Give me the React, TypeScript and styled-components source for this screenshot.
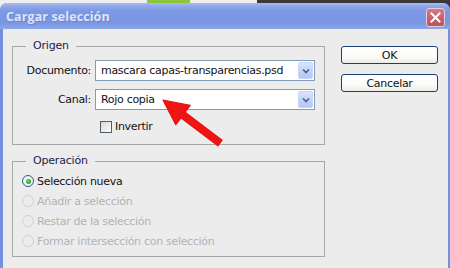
import React from "react";
import styled, { createGlobalStyle } from "styled-components";

const Global = createGlobalStyle`
  html, body { margin: 0; padding: 0; }
  body {
    width: 450px; height: 268px; overflow: hidden;
    font-family: "DejaVu Sans", Tahoma, sans-serif;
  }
`;

const Screen = styled.div`
  position: relative;
  width: 450px;
  height: 268px;
  display: flex;
  flex-direction: column;
  background: linear-gradient(90deg, #eeeeee 0 147px, #8cc43a 147px 190px, #eeeeee 190px 257px, #3a3a3a 257px 450px);
`;

const Window = styled.div`
  margin-top: 3px;
  flex: 1;
  display: flex;
  flex-direction: column;
  border-radius: 7px 7px 0 0;
  background: #7690e0;
  overflow: hidden;
`;

const TitleBar = styled.div`
  height: 26px;
  flex: none;
  display: flex;
  align-items: center;
  justify-content: space-between;
  padding: 0 5px 0 6px;
  background: linear-gradient(180deg, #a9bcf1 0px, #8ea8ea 3px, #7c98e3 8px, #7a96e2 20px, #86a1e7 24px, #8ea7e8 26px);
`;

const Title = styled.span`
  font-family: "Open Sans", "DejaVu Sans", sans-serif;
  font-weight: 700;
  font-size: 12.5px;
  color: #dde5f9;
  letter-spacing: 0.1px;
  text-shadow: 1px 1px 0 rgba(80, 100, 170, 0.35);
`;

const CloseButton = styled.div`
  width: 17px;
  height: 17px;
  border: 1px solid #e6cbd2;
  border-radius: 3px;
  background: linear-gradient(180deg, #d27c88 0%, #c0606e 60%, #b45765 100%);
  display: flex;
  align-items: center;
  justify-content: center;
  margin-top: 2px;
`;

const Body = styled.div`
  flex: 1;
  margin: 0 2px 0 3px;
  background: #ececec;
  display: flex;
  gap: 16px;
  padding: 11px 10px 0 9px;
`;

const LeftColumn = styled.div`
  width: 313px;
  display: flex;
  flex-direction: column;
  gap: 10px;
`;

const Group = styled.fieldset<{ $pb: number }>`
  margin: 0;
  border: 1px solid #a7a7a7;
  padding: 0 9px ${(p) => p.$pb}px 9px;
  min-width: 0;
`;

const Legend = styled.legend`
  margin-left: 4px;
  padding: 0 7px;
  font-size: 11px;
  line-height: 12px;
  letter-spacing: -0.2px;
  color: #1c2050;
`;

const FormGrid = styled.div`
  display: grid;
  grid-template-columns: 69px 220px;
  grid-template-rows: 21px 21px 17px;
  column-gap: 4px;
  row-gap: 8px;
  padding-top: 8px;
  align-items: center;
`;

const Label = styled.label`
  font-size: 11px;
  letter-spacing: -0.3px;
  color: #111;
  text-align: right;
  white-space: nowrap;
`;

const Select = styled.div`
  height: 21px;
  box-sizing: border-box;
  border: 1px solid #7f9db9;
  background: #fff;
  display: flex;
  align-items: center;
  justify-content: space-between;
  padding: 0 1px 0 5px;
`;

const SelectText = styled.span`
  font-size: 11px;
  letter-spacing: -0.3px;
  color: #111;
  white-space: nowrap;
`;

const DropButton = styled.div`
  width: 15px;
  height: 17px;
  box-sizing: border-box;
  border: 1px solid #c6d5f8;
  border-radius: 2px;
  background: linear-gradient(180deg, #dbe5fd 0%, #c3d3f9 50%, #b5c8f5 100%);
  display: flex;
  align-items: center;
  justify-content: center;
`;

const CheckRow = styled.div`
  grid-column: 2;
  display: flex;
  align-items: center;
  gap: 3px;
  padding-left: 5px;
  height: 17px;
`;

const CheckBox = styled.div`
  width: 12px;
  height: 12px;
  box-sizing: border-box;
  border: 1px solid #4f5b68;
  background: linear-gradient(135deg, #d8d8d4 0%, #f2f2f0 70%, #ffffff 100%);
`;

const RadioList = styled.div`
  display: flex;
  flex-direction: column;
  padding-top: 4px;
`;

const RadioRow = styled.div<{ $disabled?: boolean }>`
  height: 20px;
  display: flex;
  align-items: center;
  gap: 3px;
  font-size: 11px;
  letter-spacing: -0.3px;
  color: ${(p) => (p.$disabled ? "#b3b3b3" : "#111")};
  white-space: nowrap;
`;

const RadioCircle = styled.div<{ $disabled?: boolean; $checked?: boolean }>`
  width: 12px;
  height: 12px;
  box-sizing: border-box;
  border-radius: 50%;
  border: 1px solid ${(p) => (p.$disabled ? "#d0d0d0" : "#2b5c8a")};
  background: ${(p) =>
    p.$disabled ? "#ececec" : "radial-gradient(circle at 60% 60%, #ffffff 0%, #e6e6e0 100%)"};
  display: flex;
  align-items: center;
  justify-content: center;
  &::after {
    content: "";
    display: ${(p) => (p.$checked ? "block" : "none")};
    width: 5px;
    height: 5px;
    border-radius: 50%;
    background: radial-gradient(circle at 40% 40%, #6fdc6f 0%, #21a221 70%);
  }
`;

const RightColumn = styled.div`
  width: 97px;
  display: flex;
  flex-direction: column;
  gap: 10px;
  padding-top: 6px;
`;

const Button = styled.button`
  height: 18px;
  width: 97px;
  box-sizing: border-box;
  border: 1px solid #1d3f73;
  border-radius: 3px;
  background: linear-gradient(180deg, #ffffff 0%, #fbfbfa 60%, #ecebe6 100%);
  font-family: "DejaVu Sans", Tahoma, sans-serif;
  font-size: 11px;
  letter-spacing: -0.3px;
  color: #111;
  padding: 0;
  display: flex;
  align-items: center;
  justify-content: center;
`;

const Overlay = styled.svg`
  position: absolute;
  left: 0;
  top: 0;
  pointer-events: none;
`;

export default function App() {
  return (
    <>
      <Global />
      <Screen>
        <Window>
          <TitleBar>
            <Title>Cargar selección</Title>
            <CloseButton>
              <svg width="11" height="11" viewBox="0 0 11 11">
                <path d="M1.5 1.5 L9.5 9.5 M9.5 1.5 L1.5 9.5" stroke="#fff" strokeWidth="2" strokeLinecap="square" />
              </svg>
            </CloseButton>
          </TitleBar>
          <Body>
            <LeftColumn>
              <Group $pb={9}>
                <Legend>Origen</Legend>
                <FormGrid>
                  <Label>Documento:</Label>
                  <Select>
                    <SelectText>mascara capas-transparencias.psd</SelectText>
                    <DropButton>
                      <svg width="8" height="6" viewBox="0 0 8 6">
                        <path d="M1 1.5 L4 4.5 L7 1.5" fill="none" stroke="#4d6185" strokeWidth="1.6" />
                      </svg>
                    </DropButton>
                  </Select>
                  <Label>Canal:</Label>
                  <Select>
                    <SelectText>Rojo copia</SelectText>
                    <DropButton>
                      <svg width="8" height="6" viewBox="0 0 8 6">
                        <path d="M1 1.5 L4 4.5 L7 1.5" fill="none" stroke="#4d6185" strokeWidth="1.6" />
                      </svg>
                    </DropButton>
                  </Select>
                  <CheckRow>
                    <CheckBox />
                    <SelectText>Invertir</SelectText>
                  </CheckRow>
                </FormGrid>
              </Group>
              <Group $pb={5}>
                <Legend>Operación</Legend>
                <RadioList>
                  <RadioRow>
                    <RadioCircle $checked />
                    Selección nueva
                  </RadioRow>
                  <RadioRow $disabled>
                    <RadioCircle $disabled />
                    Añadir a selección
                  </RadioRow>
                  <RadioRow $disabled>
                    <RadioCircle $disabled />
                    Restar de la selección
                  </RadioRow>
                  <RadioRow $disabled>
                    <RadioCircle $disabled />
                    Formar intersección con selección
                  </RadioRow>
                </RadioList>
              </Group>
            </LeftColumn>
            <RightColumn>
              <Button>OK</Button>
              <Button>Cancelar</Button>
            </RightColumn>
          </Body>
        </Window>
        <Overlay width="450" height="268" viewBox="0 0 450 268">
          <polygon
            points="163,100 190.2,105.4 185.1,112.2 222.1,140.2 217.9,145.8 180.9,117.8 175.8,124.6"
            fill="#f01414"
            stroke="#e81010"
            strokeWidth="1.2"
            strokeLinejoin="round"
          />
        </Overlay>
      </Screen>
    </>
  );
}
